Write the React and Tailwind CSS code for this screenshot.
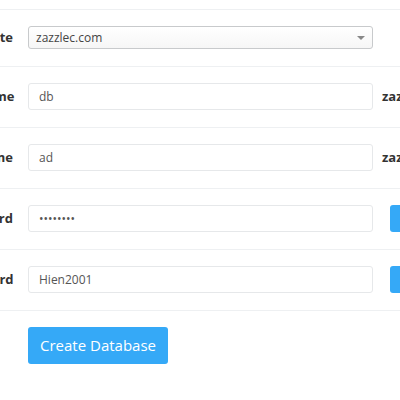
import React from 'react';

const font = { fontFamily: '"Open Sans", "Liberation Sans", sans-serif' };

function Row({ label, children, aside }) {
  return (
    <div className="flex items-center pt-[16px] pb-[17px] border-b border-[#eef0f2]">
      <label className="w-[100px] shrink-0 whitespace-nowrap text-right text-[13px] font-bold text-[#333]">{label}</label>
      <div className="ml-[15px] w-[345px] shrink-0">{children}</div>
      {aside}
    </div>
  );
}

function TextInput({ value, type = 'text' }) {
  return (
    <input
      type={type}
      defaultValue={value}
      className="block w-full h-[27px] px-[10px] text-[12px] text-[#555] bg-white border border-[#e6e8ea] rounded-[3px] outline-none"
    />
  );
}

export default function App() {
  return (
    <div className="w-[400px] h-[400px] overflow-hidden bg-white" style={font}>
      <div className="ml-[-87px] w-[600px]">
        <div className="h-[10px] border-b border-[#eef0f2]" />

        <Row label="Website">
          <div className="relative h-[23px] border border-[#c8cacc] rounded-[3px] bg-gradient-to-b from-white to-[#f6f6f6] flex items-center px-[7px] text-[12px] text-[#444]">
            zazzlec.com
            <span className="absolute right-[7px] top-[9px] w-0 h-0 border-l-[4px] border-r-[4px] border-t-[4px] border-l-transparent border-r-transparent border-t-[#888]" />
          </div>
        </Row>

        <Row label="Database name" aside={<span className="ml-[9px] whitespace-nowrap text-[13px] font-bold text-[#333]">zazzlec_db</span>}>
          <TextInput value="db" />
        </Row>

        <Row label="Username" aside={<span className="ml-[9px] whitespace-nowrap text-[13px] font-bold text-[#333]">zazzlec_ad</span>}>
          <TextInput value="ad" />
        </Row>

        <Row
          label="Password"
          aside={<button className="ml-[17px] h-[27px] px-4 shrink-0 rounded-[3px] bg-[#35a9f7] text-white text-[13px]">Generate</button>}
        >
          <TextInput type="password" value="ad123456" />
        </Row>

        <Row
          label="Show password"
          aside={<button className="ml-[17px] h-[27px] px-4 shrink-0 rounded-[3px] bg-[#35a9f7] text-white text-[13px]">Copy</button>}
        >
          <TextInput value="Hien2001" />
        </Row>

        <div className="pt-[16px] pl-[115px]">
          <button className="h-[37px] w-[140px] rounded-[3px] bg-[#35a9f7] text-white text-[15px]">Create Database</button>
        </div>
      </div>
    </div>
  );
}
